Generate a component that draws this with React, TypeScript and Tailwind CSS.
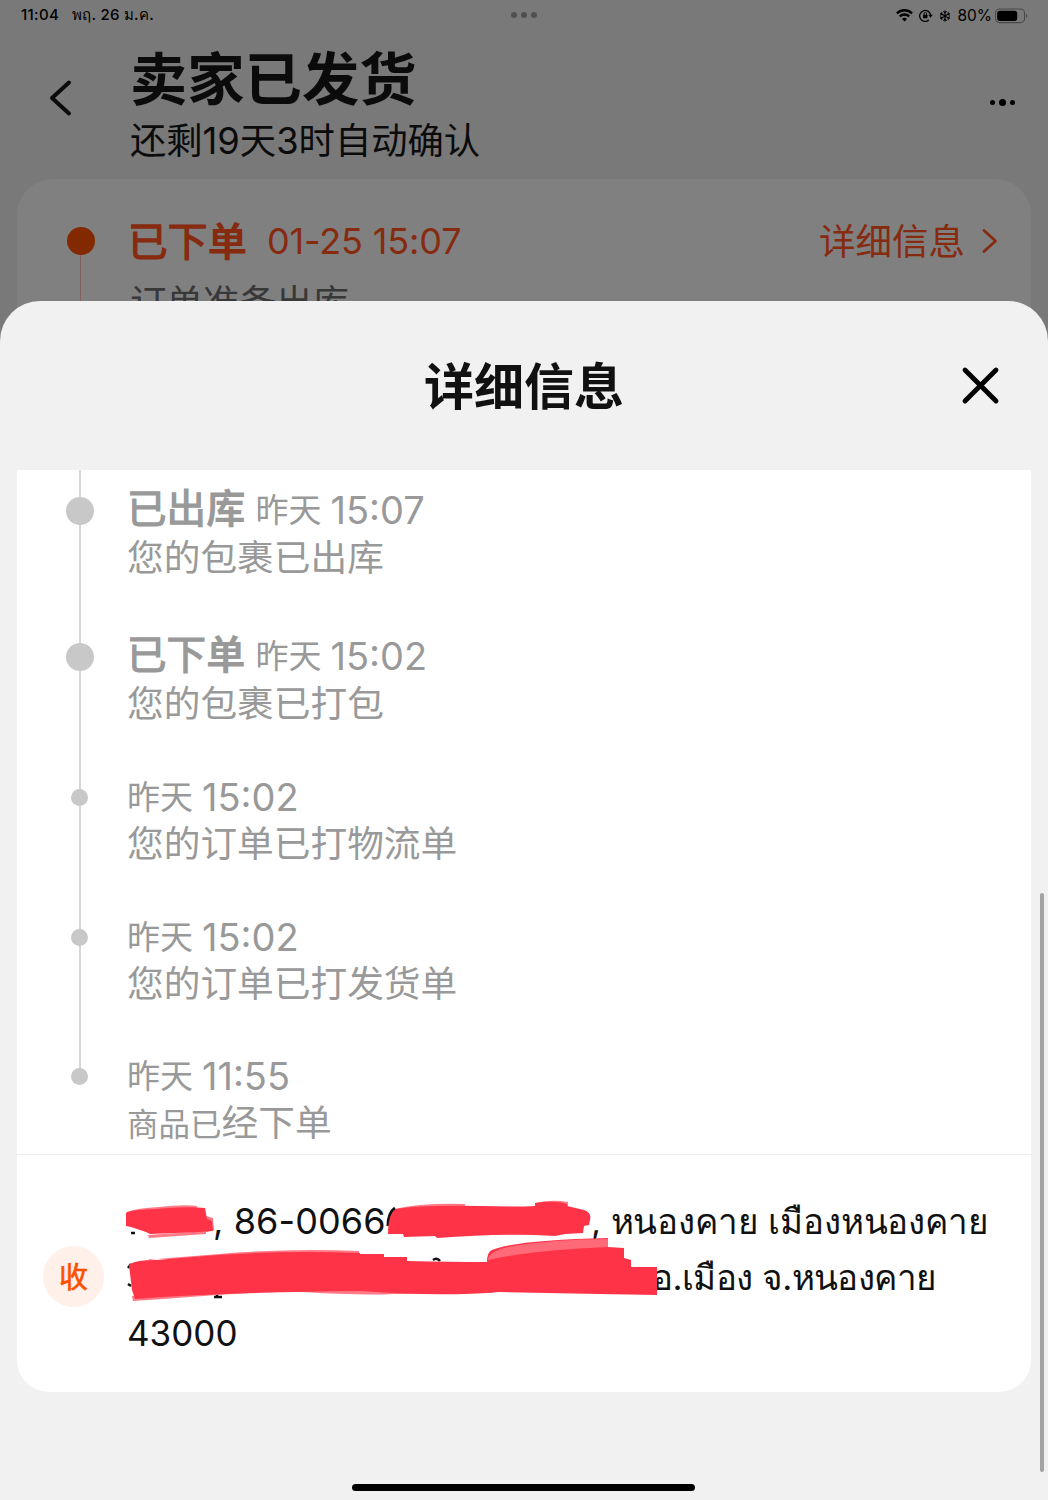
import React from 'react';
import clsx from 'clsx';

type Step = {
  lead?: string;
  tail?: string;
  time: string;
  small?: string;
  body: string;
  height: string;
};

const steps: Step[] = [
  { lead: '已出', tail: '库', time: '15:07', body: '您的包裹已出库', height: 'h-[146px]' },
  { lead: '已下', tail: '单', time: '15:02', body: '您的包裹已打包', height: 'h-[141px]' },
  { time: '15:02', body: '您的订单已打物流单', height: 'h-[140px]' },
  { time: '15:02', body: '您的订单已打发货单', height: 'h-[139px]' },
  { time: '11:55', small: '商品已', body: '经下单', height: 'h-[90px]' },
];

const StatusBar = () => (
  <div className="relative flex h-[30px] items-center justify-between pl-[21px] pr-[19px] pt-px text-[15px] font-medium text-black">
    <div className="flex gap-[13px]">
      <span className="tracking-[0.3px]">11:04</span>
      <span className="tracking-[0.25px]">พฤ. 26 ม.ค.</span>
    </div>
    <div className="absolute left-[511px] top-[12px] flex gap-[4px]">
      <span className="h-[6px] w-[6px] rounded-full bg-[#505050]" />
      <span className="h-[6px] w-[6px] rounded-full bg-[#505050]" />
      <span className="h-[6px] w-[6px] rounded-full bg-[#505050]" />
    </div>
    <div className="flex items-center">
      <svg className="mr-[6px] h-[13px] w-[17px]" viewBox="0 0 17 13" fill="none" stroke="currentColor" strokeWidth="2.3">
        <path d="M.9 4.4a10.8 10.8 0 0 1 15.2 0" />
        <path d="M3.7 7.4a7 7 0 0 1 9.6 0" />
        <path d="M8.5 12.4 6 9.9a3.6 3.6 0 0 1 5 0z" fill="currentColor" stroke="none" />
      </svg>
      <svg className="mr-[6px] h-[13px] w-[14px]" viewBox="0 0 14 13" fill="none" stroke="currentColor" strokeWidth="1.3">
        <path d="M9.8 11.1A5.5 5.5 0 1 1 11.6 6" />
        <path d="M9.4 5.8h4.4l-2.2 2.9z" fill="currentColor" stroke="none" />
        <rect x="4.1" y="5.7" width="4.4" height="3.5" rx="0.5" fill="currentColor" stroke="none" />
        <path d="M5 6V4.8a1.3 1.3 0 0 1 2.6 0V6" strokeWidth="0.9" />
      </svg>
      <svg className="mr-[6px] h-[12px] w-[12px]" viewBox="0 0 12 12" fill="none" stroke="currentColor" strokeWidth="1.1">
        <path d="M6 .6v10.8M1.3 3.3l9.4 5.4M10.7 3.3 1.3 8.7" />
        <path d="M4.4 1.4 6 2.8l1.6-1.4M4.4 10.6 6 9.2l1.6 1.4M1 5.2l2-.8-.3-2.2M11 5.2l-2-.8.3-2.2M1 6.8l2 .8-.3 2.2M11 6.8l-2 .8.3 2.2" />
      </svg>
      <span className="mr-[3px] text-[15.5px] font-normal">80%</span>
      <svg className="h-[16px] w-[34px]" viewBox="0 0 34 16">
        <rect x="0.6" y="1" width="29" height="13.6" rx="4" fill="none" stroke="#4a4a4a" strokeWidth="1.1" />
        <rect x="2.2" y="2.7" width="20" height="10.2" rx="2.6" fill="#000" />
        <path d="M31 5.6c1.6.7 1.6 3.7 0 4.4z" fill="#4a4a4a" />
      </svg>
    </div>
  </div>
);

const OrderHeader = () => (
  <div className="flex h-[149px] text-[#0b0b0b]">
    <div className="w-[130px] pl-[49px] pt-[49px]">
      <svg className="h-[38px] w-[24px]" viewBox="0 0 24 38" fill="none" stroke="currentColor" strokeWidth="4" strokeLinecap="round" strokeLinejoin="round">
        <path d="M20 3.5 3 19l17 15.5" />
      </svg>
    </div>
    <div className="flex-1 pt-[14px]">
      <h1 className="h-[70px] whitespace-nowrap text-[57.3px] font-bold leading-[70px]">卖家已发货</h1>
      <p className="h-[54px] whitespace-nowrap text-[36.3px] leading-[54px]">还剩19天3时自动确认</p>
    </div>
    <div className="flex h-[144px] items-center gap-[4px] pr-[33px] text-black">
      <span className="h-[5px] w-[5px] rounded-full bg-current" />
      <span className="h-[7px] w-[7px] rounded-full bg-current" />
      <span className="h-[5px] w-[5px] rounded-full bg-current" />
    </div>
  </div>
);

const OrderCard = () => (
  <div className="ml-[17px] mr-[17px] h-[200px] rounded-t-[36px] bg-[#808080] pt-[36px]">
    <div className="flex h-[52px] items-center text-[#862a10]">
      <div className="relative ml-[50px] mr-[33px] h-[28px] w-[28px] rounded-full bg-[#832900]">
        <span className="absolute left-[13px] top-[28px] h-[60px] w-px bg-[#86605c]" />
      </div>
      <span className="pt-[3px] text-[39.7px]">
        <span className="[-webkit-text-stroke:1.3px]">已下</span>
        <span className="font-bold">单</span>
      </span>
      <span className="ml-[20px] text-[36px] tracking-[-0.15px]">01-25 15:07</span>
      <span className="ml-auto pt-[2px] text-[36.5px]">详细信息</span>
      <svg className="ml-[17px] mr-[33px] h-[26px] w-[16px]" viewBox="0 0 16 26" fill="none" stroke="currentColor" strokeWidth="2.8" strokeLinecap="round" strokeLinejoin="round">
        <path d="m2 2.5 11.5 10.5L2 23.5" />
      </svg>
    </div>
    <p className="ml-[113px] h-[74px] text-[36.5px] leading-[72px] text-[#383838]">订单准备出库</p>
  </div>
);

const StepRow = ({ step }: { step: Step }) => (
  <li className={clsx('relative flex', step.height)}>
    <div className={clsx('flex w-[110px] items-center', step.lead ? 'h-[48px] pl-[49px]' : 'h-[47px] pl-[54px]')}>
      <span className={clsx('rounded-full bg-[#c8c8c8]', step.lead ? 'h-[28px] w-[28px]' : 'h-[17px] w-[17px]')} />
    </div>
    <div className="whitespace-nowrap">
      <div className="flex h-[46px] items-center">
        {step.lead && (
          <span className="mr-[10px] text-[39.5px]">
            <span className="[-webkit-text-stroke:1.3px]">{step.lead}</span>
            <span className="font-bold">{step.tail}</span>
          </span>
        )}
        <span className="pt-[2px] text-[33px]">昨天</span>
        <span className="ml-[9px] pt-px text-[38px]">{step.time}</span>
      </div>
      <p className={clsx('pt-px text-[36.7px]', step.lead ? 'leading-[48px]' : 'leading-[45px]')}>
        {step.small && <span className="text-[31.5px]">{step.small}</span>}
        {step.body}
      </p>
    </div>
  </li>
);

const Address = () => (
  <div className="flex h-[238px] border-t border-[#ececec]">
    <div className="w-[110px] pl-[26px] pt-[91px]">
      <div className="flex h-[61px] w-[61px] items-center justify-center rounded-full bg-[#fff0ea] pt-[2px] text-[29px] text-[#fa5000] [-webkit-text-stroke:0.6px]">
        收
      </div>
    </div>
    <div className="relative pt-[38px] text-[35px] text-[#111]">
      <p className="flex h-[56px] items-center whitespace-nowrap">
        <span className="w-[86px]" />
        <span className="w-[299px] text-[36px] tracking-[0.1px]">, 86-0066</span>
        <span className="w-[79px]" />
        <span className="tracking-[-0.15px]">, หนองคาย เมืองหนองคาย</span>
      </p>
      <p className="flex h-[56px] items-center whitespace-nowrap">
        <span className="w-[525px]" />
        <span className="tracking-[-0.6px]">อ.เมือง จ.หนองคาย</span>
      </p>
      <p className="flex h-[56px] items-center whitespace-nowrap">43000</p>

      {/* marker strokes over the private part of the address */}
      <svg className="absolute left-[-7px] top-[35px] h-[120px] w-[545px]" viewBox="120 1190 545 120" fill="#ff3347">
        <path d="M131 1233h4M128 1268l3-4M128 1284l3 2M214 1297h8M217 1291v5M433 1260q4-3 7 1" stroke="#111" strokeWidth="2.5" fill="none" />
        <path d="M388 1226q0-13 7-18" stroke="#111" strokeWidth="3" fill="none" />
        {/* lighter edges where the marker only passed once */}
        <g fill="#ff7a86">
          <path d="M127 1212q10-4 32-5 26-3 38-1v5l-70 5zM206 1216l7 2 1 12-8 2zM148 1235l58-4v3l-57 4z" />
          <path d="M395 1209q25-6 70-5v6h-60zM536 1203q15-4 32-1v4h-32z" />
          <path d="M137 1265q7-5 20-6l62-5q70-6 140-3v8H150zM132 1296l1 5 30-2q60-5 120-8 85 5 110 3l100-1 4-6H200z" />
        </g>
        <path d="M126 1213q2-3 30-4 30-3 49-1l2 11 5 2 1 10-13 1-50 2-4-2-15-5-5-1z" />
        <path d="M388 1234q0-20 8-25 25-4 85-3 35 1 54 0v-3q20-3 32 1v2l17 4q8 3 6 10l-1 5-5 1-1 7-18 1-10 2-20-1q-45-1-98 3l-2-2-31 1-1-3z" />
        <path d="M129 1265q5-5 27-5l62-5q70-5 142-2v1h24v3h23v4q45 1 80 1 0-10 5-12 25-10 116-12v9l16 1v10l7 2v7h26v28l-58-1-100-2q-60 5-137-1-110 1-200 6l-27 2-3-9z" />
        <path d="M488 1260q0-8 20-13 45-8 100-8v8q-75 3-120 13z" fill="#ff6a78" />
      </svg>
    </div>
  </div>
);

const DetailSheet = () => (
  <div className="absolute inset-x-0 bottom-0 top-[301px] rounded-t-[40px] bg-[#f1f1f1]">
    <div className="flex h-[169px] items-center">
      <span className="w-[87px]" />
      <h2 className="flex-1 pt-[3px] text-center text-[50px] font-bold leading-[60px] text-[#111]">详细信息</h2>
      <svg className="mr-[48px] h-[39px] w-[39px]" viewBox="0 0 39 39" stroke="#000" strokeWidth="4.8" strokeLinecap="round">
        <path d="m4 4 31 31M35 4 4 35" />
      </svg>
    </div>

    <div className="mx-[17px] rounded-b-[32px] bg-white">
      <ul className="relative h-[684px] pt-[17px] text-[#999]">
        <span className="absolute left-[62px] top-0 h-[606px] w-[2px] bg-[#d6d6d6]" />
        {steps.map((step, i) => (
          <StepRow key={i} step={step} />
        ))}
      </ul>
      <Address />
    </div>

    <span className="absolute right-[4px] top-[592px] h-[579px] w-[4px] rounded-full bg-[#a3a3a3]" />
    <span className="absolute bottom-[9px] left-[352px] h-[7px] w-[343px] rounded-full bg-black" />
  </div>
);

const App = () => {
  return (
    <div className="relative h-[1500px] w-[1048px] overflow-hidden bg-[#797979] font-['Inter','Noto_Sans_CJK_SC',sans-serif]">
      <StatusBar />
      <OrderHeader />
      <OrderCard />
      <DetailSheet />
    </div>
  );
};

export default App;
